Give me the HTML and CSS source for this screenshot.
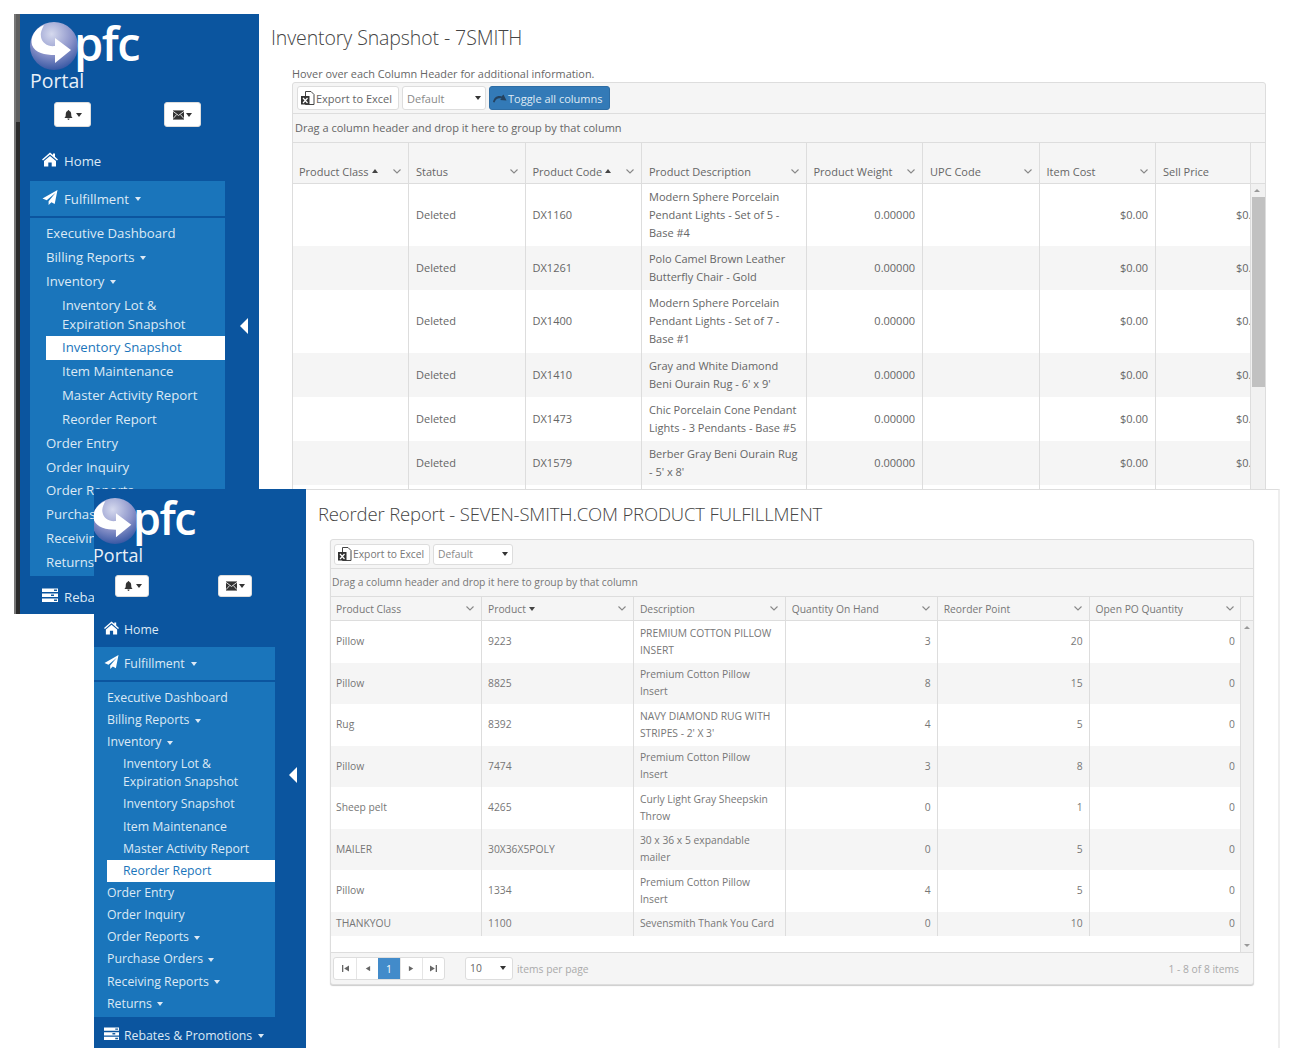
FILE: index.html
```html
<!DOCTYPE html>
<html lang="en">
<head>
    <meta charset="UTF-8">
    <title>Portal</title>
    <link rel="stylesheet" href="styles.css">
</head>
<body>
    <!-- shared icons -->
    <svg class="defs" width="0" height="0">
        <defs>
            <radialGradient id="globe" cx="45%" cy="25%" r="80%">
                <stop offset="0" stop-color="#d5d9ee"/>
                <stop offset="0.55" stop-color="#8b93c9"/>
                <stop offset="1" stop-color="#2c4f9e"/>
            </radialGradient>
            <symbol id="i-logo" viewBox="0 0 48 48">
                <circle cx="24" cy="24" r="24" fill="url(#globe)"/>
                <path fill="#fff" d="M14 3C4 7 0 16 2 23 5 31 15 33 25 33L25 41 41 28 25 16 25 24C18 25 12 21 11 15 10 11 12 7 14 3Z"/>
            </symbol>
            <symbol id="i-bell" viewBox="0 0 12 12">
                <path fill="#333" d="M6 0C7 0 7 1 7 1.300 9 2 9.300 4 9.300 6 9.300 8 10 8.700 11 9.500L1 9.500C2 8.700 2.700 8 2.700 6 2.700 4 3 2 5 1.300 5 1 5 0 6 0ZM4.700 10.300H7.300C7.300 11.400 6.700 12 6 12 5.300 12 4.700 11.400 4.700 10.300Z"/>
            </symbol>
            <symbol id="i-mail" viewBox="0 0 12 10">
                <rect width="12" height="10" fill="#333"/>
                <path fill="none" stroke="#fff" stroke-width="0.900" d="M0 1 6 5.500 12 1M0 9 4 4.500M12 9 8 4.500"/>
            </symbol>
            <symbol id="i-home" viewBox="0 0 16 14">
                <path fill="#fff" d="M8 0 11 2.500V1H13V4.200L16 7 15 8 8 2 1 8 0 7ZM8 3.500 14 8.500V14H9.700V10H6.300V14H2V8.500Z"/>
            </symbol>
            <symbol id="i-plane" viewBox="0 0 16 16">
                <path fill="#fff" d="M16 0 0 9 4.500 11 14 3 6.500 12V16L9.500 13 13 15Z"/>
            </symbol>
            <symbol id="i-tasks" viewBox="0 0 16 14">
                <path fill="#fff" d="M0 0H16V3.500H0ZM0 5H16V8.500H0ZM0 10H16V13.500H0Z"/>
                <path fill="#1a5f9f" d="M12 1H15V2.500H12ZM9 6H12V7.500H9ZM12 11H15V12.500H12Z"/>
            </symbol>
            <symbol id="i-excel" viewBox="0 0 14 15">
                <path fill="#fff" stroke="#444" d="M4.500 .5H10L13 3.500V13.500H4.500Z"/>
                <rect y="5" width="8.500" height="8.500" fill="#333"/>
                <path stroke="#fff" stroke-width="1.200" d="M2 7 6.500 12M6.500 7 2 12"/>
            </symbol>
            <symbol id="i-redo" viewBox="0 0 14 9">
                <path fill="#24425f" d="M0 8C1 3 5 1 8.500 2.500L10.500 .5 13.500 6.500 7 6 8.500 4.500C5.500 3.500 2.500 5 1.500 8.500Z"/>
            </symbol>
            <symbol id="i-chev" viewBox="0 0 8 5">
                <path fill="none" stroke="#888" stroke-width="1.100" d="M.5 .5 4 4 7.500 .5"/>
            </symbol>
            <symbol id="i-first" viewBox="0 0 8 8">
                <path fill="#666" d="M0 0H1.500V8H0ZM8 .5V7.500L2.500 4Z"/>
            </symbol>
            <symbol id="i-prev" viewBox="0 0 8 8">
                <path fill="#666" d="M7 1V7L2 4Z"/>
            </symbol>
            <symbol id="i-next" viewBox="0 0 8 8">
                <path fill="#666" d="M1 1V7L6 4Z"/>
            </symbol>
            <symbol id="i-last" viewBox="0 0 8 8">
                <path fill="#666" d="M6.500 0H8V8H6.500ZM0 .5V7.500L5.500 4Z"/>
            </symbol>
        </defs>
    </svg>

    <!-- back window : inventory snapshot -->
    <div class="window win-a">
        <div class="edge"></div>
        <aside class="sidebar">
            <div class="brand">
                <svg class="logo"><use href="#i-logo"/></svg>
                <span class="brand-name">pfc</span>
            </div>
            <div class="portal">Portal</div>
            <div class="alerts">
                <button class="alert-btn"><svg class="alert-icon"><use href="#i-bell"/></svg><i class="caret"></i></button>
                <button class="alert-btn"><svg class="alert-icon"><use href="#i-mail"/></svg><i class="caret"></i></button>
            </div>
            <a class="top-link home"><svg class="top-icon"><use href="#i-home"/></svg>Home</a>
            <a class="top-link section"><svg class="top-icon"><use href="#i-plane"/></svg>Fulfillment <i class="caret light"></i></a>
            <ul class="side-panel">
                <li>Executive Dashboard</li>
                <li>Billing Reports <i class="caret light"></i></li>
                <li>Inventory <i class="caret light"></i></li>
                <li class="sub two-line">Inventory Lot &amp;<br>Expiration Snapshot</li>
                <li class="sub active">Inventory Snapshot</li>
                <li class="sub">Item Maintenance</li>
                <li class="sub">Master Activity Report</li>
                <li class="sub">Reorder Report</li>
                <li>Order Entry</li>
                <li>Order Inquiry</li>
                <li>Order Reports <i class="caret light"></i></li>
                <li>Purchase Orders <i class="caret light"></i></li>
                <li>Receiving Reports <i class="caret light"></i></li>
                <li>Returns <i class="caret light"></i></li>
            </ul>
            <a class="top-link rebates"><svg class="top-icon"><use href="#i-tasks"/></svg>Rebates &amp; Promotions <i class="caret light"></i></a>
            <i class="collapse"></i>
        </aside>
        <main class="content">
            <h1 class="page-title">Inventory Snapshot - 7SMITH</h1>
            <p class="hint">Hover over each Column Header for additional information.</p>
            <section class="grid">
                <div class="toolbar">
                    <button class="tool-btn export"><svg class="excel"><use href="#i-excel"/></svg>Export to Excel</button>
                    <div class="dropdown view-select"><span>Default</span><i class="caret"></i></div>
                    <button class="tool-btn toggle"><svg class="redo"><use href="#i-redo"/></svg>Toggle all columns</button>
                </div>
                <div class="group-bar">Drag a column header and drop it here to group by that column</div>
                <div class="grid-main">
                    <div class="grid-scroll">
                        <table>
                            <colgroup>
                                <col class="col"><col class="col"><col class="col"><col class="col-wide"><col class="col"><col class="col"><col class="col"><col class="col">
                            </colgroup>
                            <thead>
                                <tr>
                                    <th><div class="th-in">Product Class <i class="sort-up"></i><svg class="chev"><use href="#i-chev"/></svg></div></th>
                                    <th><div class="th-in">Status<svg class="chev"><use href="#i-chev"/></svg></div></th>
                                    <th><div class="th-in">Product Code <i class="sort-up"></i><svg class="chev"><use href="#i-chev"/></svg></div></th>
                                    <th><div class="th-in">Product Description<svg class="chev"><use href="#i-chev"/></svg></div></th>
                                    <th><div class="th-in">Product Weight<svg class="chev"><use href="#i-chev"/></svg></div></th>
                                    <th><div class="th-in">UPC Code<svg class="chev"><use href="#i-chev"/></svg></div></th>
                                    <th><div class="th-in">Item Cost<svg class="chev"><use href="#i-chev"/></svg></div></th>
                                    <th><div class="th-in">Sell Price<svg class="chev"><use href="#i-chev"/></svg></div></th>
                                </tr>
                            </thead>
                            <tbody>
                                <tr><td></td><td>Deleted</td><td>DX1160</td><td>Modern Sphere Porcelain Pendant Lights - Set of 5 - Base #4</td><td class="num">0.00000</td><td></td><td class="num">$0.00</td><td class="num">$0.00</td></tr>
                                <tr class="alt"><td></td><td>Deleted</td><td>DX1261</td><td>Polo Camel Brown Leather Butterfly Chair - Gold</td><td class="num">0.00000</td><td></td><td class="num">$0.00</td><td class="num">$0.00</td></tr>
                                <tr><td></td><td>Deleted</td><td>DX1400</td><td>Modern Sphere Porcelain Pendant Lights - Set of 7 - Base #1</td><td class="num">0.00000</td><td></td><td class="num">$0.00</td><td class="num">$0.00</td></tr>
                                <tr class="alt"><td></td><td>Deleted</td><td>DX1410</td><td>Gray and White Diamond Beni Ourain Rug - 6' x 9'</td><td class="num">0.00000</td><td></td><td class="num">$0.00</td><td class="num">$0.00</td></tr>
                                <tr><td></td><td>Deleted</td><td>DX1473</td><td>Chic Porcelain Cone Pendant Lights - 3 Pendants - Base #5</td><td class="num">0.00000</td><td></td><td class="num">$0.00</td><td class="num">$0.00</td></tr>
                                <tr class="alt"><td></td><td>Deleted</td><td>DX1579</td><td>Berber Gray Beni Ourain Rug - 5' x 8'</td><td class="num">0.00000</td><td></td><td class="num">$0.00</td><td class="num">$0.00</td></tr>
                                <tr><td>&nbsp;</td><td></td><td></td><td></td><td></td><td></td><td></td><td></td></tr>
                            </tbody>
                        </table>
                    </div>
                    <div class="grid-bar">
                        <div class="bar-head"></div>
                        <div class="scrollbar"><i class="arrow-up"></i><div class="thumb"></div></div>
                    </div>
                </div>
            </section>
        </main>
    </div>

    <!-- front window : reorder report -->
    <div class="window win-b">
        <aside class="sidebar">
            <div class="brand">
                <svg class="logo"><use href="#i-logo"/></svg>
                <span class="brand-name">pfc</span>
            </div>
            <div class="portal">Portal</div>
            <div class="alerts">
                <button class="alert-btn"><svg class="alert-icon"><use href="#i-bell"/></svg><i class="caret"></i></button>
                <button class="alert-btn"><svg class="alert-icon"><use href="#i-mail"/></svg><i class="caret"></i></button>
            </div>
            <a class="top-link home"><svg class="top-icon"><use href="#i-home"/></svg>Home</a>
            <a class="top-link section"><svg class="top-icon"><use href="#i-plane"/></svg>Fulfillment <i class="caret light"></i></a>
            <ul class="side-panel">
                <li>Executive Dashboard</li>
                <li>Billing Reports <i class="caret light"></i></li>
                <li>Inventory <i class="caret light"></i></li>
                <li class="sub two-line">Inventory Lot &amp;<br>Expiration Snapshot</li>
                <li class="sub">Inventory Snapshot</li>
                <li class="sub">Item Maintenance</li>
                <li class="sub">Master Activity Report</li>
                <li class="sub active">Reorder Report</li>
                <li>Order Entry</li>
                <li>Order Inquiry</li>
                <li>Order Reports <i class="caret light"></i></li>
                <li>Purchase Orders <i class="caret light"></i></li>
                <li>Receiving Reports <i class="caret light"></i></li>
                <li>Returns <i class="caret light"></i></li>
            </ul>
            <a class="top-link rebates"><svg class="top-icon"><use href="#i-tasks"/></svg>Rebates &amp; Promotions <i class="caret light"></i></a>
            <i class="collapse"></i>
        </aside>
        <main class="content">
            <h1 class="page-title">Reorder Report - SEVEN-SMITH.COM PRODUCT FULFILLMENT</h1>
            <section class="grid">
                <div class="toolbar">
                    <button class="tool-btn export"><svg class="excel"><use href="#i-excel"/></svg>Export to Excel</button>
                    <div class="dropdown view-select"><span>Default</span><i class="caret"></i></div>
                </div>
                <div class="group-bar">Drag a column header and drop it here to group by that column</div>
                <div class="grid-main">
                    <div class="grid-scroll">
                        <table>
                            <colgroup>
                                <col class="col"><col class="col"><col class="col"><col class="col"><col class="col"><col class="col">
                            </colgroup>
                            <thead>
                                <tr>
                                    <th><div class="th-in">Product Class<svg class="chev"><use href="#i-chev"/></svg></div></th>
                                    <th><div class="th-in">Product <i class="sort-down"></i><svg class="chev"><use href="#i-chev"/></svg></div></th>
                                    <th><div class="th-in">Description<svg class="chev"><use href="#i-chev"/></svg></div></th>
                                    <th><div class="th-in">Quantity On Hand<svg class="chev"><use href="#i-chev"/></svg></div></th>
                                    <th><div class="th-in">Reorder Point<svg class="chev"><use href="#i-chev"/></svg></div></th>
                                    <th><div class="th-in">Open PO Quantity<svg class="chev"><use href="#i-chev"/></svg></div></th>
                                </tr>
                            </thead>
                            <tbody>
                                <tr><td>Pillow</td><td>9223</td><td>PREMIUM COTTON PILLOW INSERT</td><td class="num">3</td><td class="num">20</td><td class="num">0</td></tr>
                                <tr class="alt"><td>Pillow</td><td>8825</td><td>Premium Cotton Pillow Insert</td><td class="num">8</td><td class="num">15</td><td class="num">0</td></tr>
                                <tr><td>Rug</td><td>8392</td><td>NAVY DIAMOND RUG WITH STRIPES - 2' X 3'</td><td class="num">4</td><td class="num">5</td><td class="num">0</td></tr>
                                <tr class="alt"><td>Pillow</td><td>7474</td><td>Premium Cotton Pillow Insert</td><td class="num">3</td><td class="num">8</td><td class="num">0</td></tr>
                                <tr><td>Sheep pelt</td><td>4265</td><td>Curly Light Gray Sheepskin Throw</td><td class="num">0</td><td class="num">1</td><td class="num">0</td></tr>
                                <tr class="alt"><td>MAILER</td><td>30X36X5POLY</td><td>30 x 36 x 5 expandable mailer</td><td class="num">0</td><td class="num">5</td><td class="num">0</td></tr>
                                <tr><td>Pillow</td><td>1334</td><td>Premium Cotton Pillow Insert</td><td class="num">4</td><td class="num">5</td><td class="num">0</td></tr>
                                <tr class="alt"><td>THANKYOU</td><td>1100</td><td>Sevensmith Thank You Card</td><td class="num">0</td><td class="num">10</td><td class="num">0</td></tr>
                            </tbody>
                        </table>
                    </div>
                    <div class="grid-bar">
                        <div class="bar-head"></div>
                        <div class="scrollbar"><i class="arrow-up"></i><i class="arrow-down"></i></div>
                    </div>
                </div>
                <div class="pager">
                    <div class="pages">
                        <a><svg class="page-icon"><use href="#i-first"/></svg></a>
                        <a><svg class="page-icon"><use href="#i-prev"/></svg></a>
                        <a class="current">1</a>
                        <a><svg class="page-icon"><use href="#i-next"/></svg></a>
                        <a><svg class="page-icon"><use href="#i-last"/></svg></a>
                    </div>
                    <div class="dropdown page-size"><span>10</span><i class="caret"></i></div>
                    <span class="pager-note">items per page</span>
                    <span class="pager-info">1 - 8 of 8 items</span>
                </div>
            </section>
        </main>
    </div>
</body>
</html>
```

FILE: styles.css
```css
*{margin:0; padding:0; box-sizing: border-box}
ul,li{list-style: none;}
a{text-decoration: none; color:inherit;}
body{background: #fff; font-family: "Open Sans", "Noto Sans", sans-serif; color: #666;}
.defs{position: absolute;}

/* the two overlapping windows */
.window{position: absolute; display: flex; overflow: hidden; background: #fff;}
.win-a{
    left: 14px; top: 14px; width: 1253px; height: 600px;
    --side-w: 239px; --panel-w: 195px; --side-pad: 10px; --logo: 48px; --pfc: 47px; --portal: 19.500px;
    --logo-left: 0px; --pfc-left: -4px;
    --brand-top: 8px; --alert-top: 10px; --alert-h: 25px; --alert-w: 37px; --alert-left: 34px; --alert-gap: 73px;
    --home-top: 23px; --section-top: 9px; --section-h: 35px; --link-left: 34px; --nav-size: 13.200px;
    --item-h: 23.950px; --two-line: 19px; --panel-top: 4px; --panel-bottom: 0.650px; --rebates-top: 10px;
}
.win-b{
    left: 94px; top: 489px; width: 1186px; height: 559px;
    --side-w: 212px; --panel-w: 181px; --side-pad: 0px; --logo: 46px; --pfc: 45px; --portal: 18px;
    --logo-left: -2px; --pfc-left: -5px;
    --brand-top: 9px; --alert-top: 9px; --alert-h: 22px; --alert-w: 34px; --alert-left: 21px; --alert-gap: 69px;
    --home-top: 21px; --section-top: 7px; --section-h: 33px; --link-left: 30px; --nav-size: 12.300px;
    --item-h: 22.150px; --two-line: 18px; --panel-top: 5px; --panel-bottom: 2px; --rebates-top: 8px;
}
.edge{position: relative; width: 6px; flex: none; background: #2b2b2b; border-left: 2px solid #777;}
.edge::before{content: ""; display: block; height: 108px; background: #5f5f5f;}

/* sidebar */
.sidebar{position: relative; width: var(--side-w); flex: none; padding: var(--brand-top) 0 0 var(--side-pad); background: #0b559f; color: #dce9f5; font-size: var(--nav-size);}
.brand{display: flex; height: var(--logo); margin-left: var(--logo-left);}
.logo{width: var(--logo); height: var(--logo); flex: none;}
.brand-name{margin: -3px 0 0 var(--pfc-left); font-size: var(--pfc); font-weight: 600; line-height: var(--logo); letter-spacing: -1.500px; color: #fff;}
.portal{height: 22px; font-size: var(--portal); line-height: 22px; color: #e8f0f8;}
.win-b .portal{margin-left: -1px;}
.alerts{display: flex; gap: var(--alert-gap); margin-top: var(--alert-top); padding-left: calc(var(--alert-left) - var(--side-pad));}
.alert-btn{display: flex; align-items: center; justify-content: center; gap: 2px; width: var(--alert-w); height: var(--alert-h); background: #fff; border: 1px solid #ddd; border-radius: 3px;}
.alert-icon{width: 11px; height: 10px;}
.caret{display: inline-block; width: 0; height: 0; border-top: 4px solid #333; border-left: 3px solid transparent; border-right: 3px solid transparent; vertical-align: middle;}
.caret.light{margin-left: 2px; border-top-color: #dce9f5;}
.top-link{display: flex; align-items: center; gap: 5px; height: 22px; padding-left: var(--link-left); margin-left: calc(0px - var(--side-pad)); white-space: nowrap;}
.top-link .caret{margin-left: 1px;}
.top-icon{width: 16px; height: 15px; margin: -3px 1px 0 -12px; flex: none;}
.home{margin-top: var(--home-top);}
.section{margin: var(--section-top) 0 0 0; width: var(--panel-w); height: var(--section-h); background: #1a75bb;}
.win-a .section{padding-left: 24px;}
.win-b .top-icon{width: 15px; height: 14px; margin: -3px 0 0 -20px;}
.win-b .top-link{padding-left: 30px;}
.rebates{margin-top: var(--rebates-top);}
.side-panel{width: var(--panel-w); margin-top: 2px; padding: var(--panel-top) 0 var(--panel-bottom) 0; background: #1a75bb;}
.side-panel li{height: var(--item-h); line-height: var(--item-h); padding-left: 16px; white-space: nowrap;}
.win-b .side-panel li{padding-left: 13px;}
.side-panel .sub{padding-left: 32px;}
.win-b .side-panel .sub{padding-left: 29px;}
.side-panel .two-line{height: calc(var(--two-line) * 2 + 4px); padding-top: 2px; line-height: var(--two-line);}
.side-panel .active{margin-left: 16px; padding-left: 16px; background: #fff; color: #1a75bb;}
.win-b .side-panel .active{margin-left: 13px; padding-left: 16px;}
.collapse{position: absolute; top: 304px; right: 11px; border-right: 8px solid #fff; border-top: 8px solid transparent; border-bottom: 8px solid transparent;}
.win-b .collapse{top: 278px; right: 9px;}

/* main content */
.content{flex: 1; min-width: 0; padding-left: 12px;}
.win-b .content{border-top: 1px solid #ddd; border-right: 2px solid #eee;}
.page-title{margin-top: 10px; font-size: 19.500px; font-weight: 300; line-height: 28px; letter-spacing: -0.100px; color: #444;}
.win-b .page-title{font-size: 18.500px; letter-spacing: -0.150px;}
.hint{margin: 14px 0 0 21px; height: 15px; font-size: 10.900px; line-height: 15px;}

/* grid */
.grid{border: 1px solid #ddd; border-radius: 3px; background: #f5f5f5; font-size: 11px;}
.win-a .grid{margin: 1px 0 0 21px; width: 974px;}
.win-b .grid{margin: 11px 0 0 12px; width: 924px; font-size: 10.300px; color: #777; box-shadow: 0 1px 1px #ccc;}
.toolbar{display: flex; align-items: center; gap: 3px; padding-left: 4px; border-bottom: 1px solid #ddd;}
.win-a .toolbar{height: 31px;}
.win-b .toolbar{height: 29px; padding-left: 3px;}
.tool-btn{display: flex; align-items: center; gap: 1px; height: 24px; padding: 0 3px; background: #fff; border: 1px solid #ddd; border-radius: 3px; font: inherit; color: inherit; white-space: nowrap;}
.win-b .tool-btn{height: 21px;}
.excel{width: 14px; height: 15px; flex: none;}
.toggle{background: #337ab7; border-color: #2e6da4; color: #dfeaf4; width: 121px;}
.redo{width: 14px; height: 9px; flex: none;}
.export{width: 102px;}
.win-b .export{width: 96px;}
.dropdown{display: flex; align-items: center; justify-content: space-between; padding: 0 4px; background: #fff; border: 1px solid #ddd; border-radius: 3px; color: #888;}
.view-select{width: 84px; height: 24px;}
.win-b .view-select{width: 80px; height: 21px;}
.group-bar{padding-left: 2px; border-bottom: 1px solid #ddd; white-space: nowrap;}
.win-a .group-bar{height: 29px; line-height: 28px;}
.win-b .group-bar{height: 28px; line-height: 26px; padding-left: 1px;}
.grid-main{display: flex; background: #fff;}
.grid-scroll{flex: 1; min-width: 0; overflow: hidden;}
.win-b .grid-main{height: 355px;}
.grid-bar{width: 15px; flex: none; display: flex; flex-direction: column; background: #f5f5f5; border-left: 1px solid #ddd;}
.win-b .grid-bar{width: 13px;}
.bar-head{border-bottom: 1px solid #ddd;}
.win-a .bar-head{height: 41px;}
.win-b .bar-head{height: 24px;}
.scrollbar{position: relative; flex: 1; background: #f1f1f1;}
.thumb{position: absolute; left: 1px; right: 0; top: 13px; height: 190px; background: #c1c1c1;}
.arrow-up,.arrow-down{position: absolute; left: 3px; width: 0; height: 0; border-left: 3px solid transparent; border-right: 3px solid transparent;}
.arrow-up{top: 5px; border-bottom: 3px solid #999;}
.arrow-down{bottom: 5px; border-top: 3px solid #999;}

table{border-collapse: collapse; table-layout: fixed; width: max-content;}
.win-a .col{width: 116.500px;}
.win-a .col-wide{width: 164.500px;}
.win-b .col{width: 151.900px;}
.win-a .col:first-child{width: 115.500px;}
.win-b .col:first-child{width: 150.500px;}
th{padding: 0; font-weight: 400; text-align: left; vertical-align: bottom; background: #f5f5f5; border-left: 1px solid #ddd; border-bottom: 1px solid #ddd;}
th:first-child,td:first-child{border-left: 0;}
.th-in{display: flex; align-items: center; gap: 3px; padding: 0 7px; white-space: nowrap;}
.win-a .th-in{height: 40px; padding-top: 16px;}
.win-a th:first-child .th-in{padding-left: 6px;}
.win-b .th-in{height: 23px; padding-left: 6px;}
.win-b th:first-child .th-in,.win-b td:first-child{padding-left: 5px;}
.chev{width: 8px; height: 5px; margin-left: auto; flex: none;}
.sort-up,.sort-down{width: 0; height: 0; border-left: 3px solid transparent; border-right: 3px solid transparent;}
.sort-up{border-bottom: 4px solid #444;}
.sort-down{border-top: 4px solid #444;}
td{padding: 4.100px 7px; line-height: 18px; vertical-align: middle; border-left: 1px solid #ddd; overflow: hidden;}
.win-a td:last-child{padding-right: 8px;}
.win-b td{padding-top: 3.750px; padding-bottom: 3.750px; padding-right: 6px; line-height: 17px;}
.win-b td:not(:first-child){padding-left: 6px;}
.alt td{background: #f5f5f5;}
.num{text-align: right;}

/* pager */
.pager{display: flex; align-items: center; height: 32px; padding: 0 14px 0 2px; border-top: 1px solid #ddd;}
.pages{display: flex; height: 23px; background: #fff; border: 1px solid #ddd; border-radius: 3px; overflow: hidden;}
.pages a{display: flex; align-items: center; justify-content: center; width: 22px; border-left: 1px solid #e5e5e5;}
.pages a:first-child{border-left: 0;}
.pages .current{background: #428bca; color: #fff; border-left: 0;}
.page-icon{width: 7px; height: 7px;}
.page-size{width: 48px; height: 23px; margin-left: 20px; padding: 0 6px 2px 4px; color: #666;}
.pager-note{margin-left: 4px; color: #aaa;}
.pager-info{margin-left: auto; color: #aaa;}
```
